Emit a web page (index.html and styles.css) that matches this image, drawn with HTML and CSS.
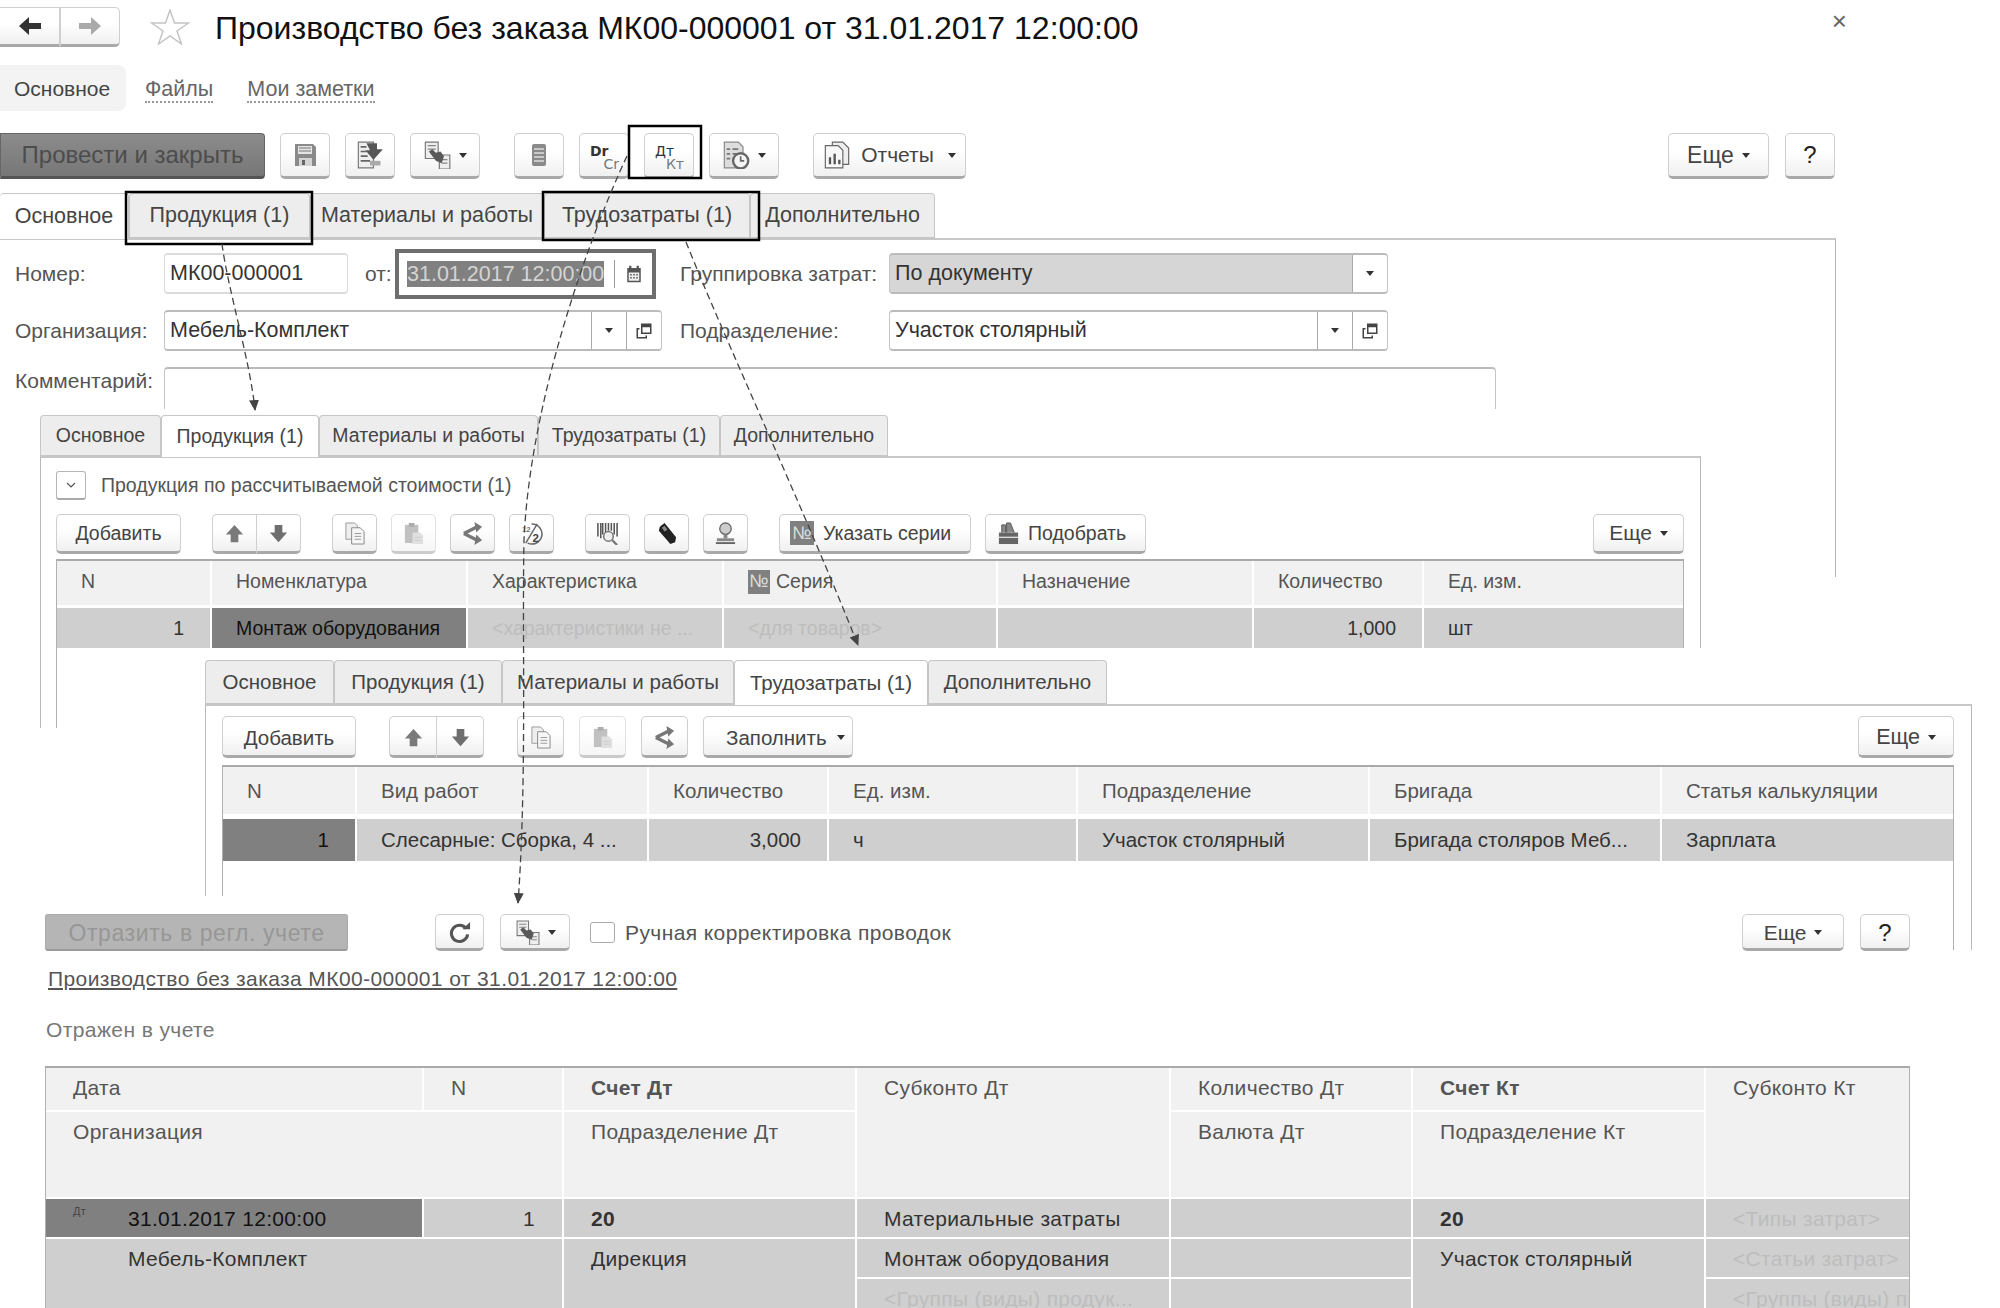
FILE: index.html
```html
<!DOCTYPE html>
<html lang="ru">
<head>
<meta charset="utf-8">
<title>Производство без заказа</title>
<link rel="stylesheet" href="styles.css">
</head>
<body>
<svg class="defs" width="0" height="0" aria-hidden="true">
  <defs>
    <symbol id="i-up" viewBox="0 0 24 24"><path d="M12 3 21 13H16V21H8V13H3Z" fill="#7a7a7a"/></symbol>
    <symbol id="i-down" viewBox="0 0 24 24"><path d="M12 21 21 11H16V3H8V11H3Z" fill="#6e6e6e"/></symbol>
    <symbol id="i-save" viewBox="0 0 24 24"><path d="M2 1H20L23 4V23H2Z" fill="#8a8a8a"/><path d="M5 3H19V11H5Z" fill="#e4e4e4"/><path d="M6 5H18M6 8H18" stroke="#999" stroke-width="1.4"/><path d="M6 15H19V23H6Z" fill="#d4d4d4"/><path d="M9 17H12V22H9Z" fill="#666"/></symbol>
    <symbol id="i-post" viewBox="0 0 24 24"><path d="M2 1H15V23H2Z" fill="#eee" stroke="#777"/><path d="M4 5H9M4 9H9M4 13H10M4 17H12" stroke="#666" stroke-width="1.4"/><path d="M9 2H18V7H23L15 16 8 8H12Z" fill="#555"/><path d="M12 17H21V21H12Z" fill="#aaa"/></symbol>
    <symbol id="i-related" viewBox="0 0 24 24"><path d="M2 1H13V15H2Z" fill="#eee" stroke="#777"/><path d="M4 4H11M4 7H11" stroke="#888"/><path d="M14 12H23V24H14Z" fill="#eee" stroke="#777"/><path d="M16 16H21M16 19H21" stroke="#888"/><path d="M5 9 8 7 11 10 15 9 18 13 16 19 11 17Z" fill="#5a5a5a"/></symbol>
    <symbol id="i-list" viewBox="0 0 24 24"><rect x="5" y="1" width="14" height="22" rx="2" fill="#8a8a8a"/><path d="M7 6H17M7 10H17M7 14H17M7 18H17" stroke="#ddd" stroke-width="1.6"/></symbol>
    <symbol id="i-report-time" viewBox="0 0 24 24"><path d="M2 1H14L18 5V23H2Z" fill="#ddd" stroke="#888"/><path d="M4 7H7M9 7H14M4 11H7M9 11H13M4 15H7" stroke="#777" stroke-width="1.5"/><circle cx="16" cy="17" r="6.5" fill="#f4f4f4" stroke="#666" stroke-width="2"/><path d="M16 13V17H19" stroke="#666" stroke-width="1.4" fill="none"/></symbol>
    <symbol id="i-reports" viewBox="0 0 24 24"><path d="M8 1H17L22 6V20H8Z" fill="#eee" stroke="#666"/><path d="M2 4H13L17 8V23H2Z" fill="#f8f8f8" stroke="#666"/><path d="M5 20V14H7V20ZM9 20V11H11V20ZM13 20V16H15V20Z" fill="#555"/></symbol>
    <symbol id="i-cal" viewBox="0 0 24 24"><path d="M3 4H21V23H3Z" fill="#555"/><path d="M7 1V6M17 1V6" stroke="#555" stroke-width="3"/><path d="M5 10H19V21H5Z" fill="#eee"/><path d="M7 12H9V14H7ZM11 12H13V14H11ZM15 12H17V14H15ZM7 16H9V18H7ZM11 16H13V18H11ZM15 16H17V18H15Z" fill="#555"/></symbol>
    <symbol id="i-open" viewBox="0 0 24 24"><path d="M9 3H21V15H9Z" fill="none" stroke="#444" stroke-width="2"/><path d="M9 3H21V7H9Z" fill="#444"/><path d="M6 9H3V21H15V18" fill="none" stroke="#444" stroke-width="2"/></symbol>
    <symbol id="i-copy" viewBox="0 0 24 24"><path d="M3 1H12L15 4V18H3Z" fill="#eee" stroke="#999"/><path d="M9 6H18L22 10V23H9Z" fill="#f6f6f6" stroke="#888"/><path d="M12 12H19M12 15H19M12 18H19" stroke="#999"/></symbol>
    <symbol id="i-paste" viewBox="0 0 24 24"><path d="M3 3H17V22H3Z" fill="#999"/><path d="M7 1H13V5H7Z" fill="#777"/><path d="M11 11H19L22 14V23H11Z" fill="#ccc"/><path d="M13 16H20M13 19H20" stroke="#aaa"/></symbol>
    <symbol id="i-share" viewBox="0 0 24 24"><path d="M3 12 17 5M3 12 17 19" fill="none" stroke="#777" stroke-width="3.600"/><path d="M14 0 22 5 16 11ZM16 13 22 19 14 24Z" fill="#777"/></symbol>
    <symbol id="i-half" viewBox="0 0 24 24"><path d="M12 2A10.500 10.500 0 1 1 8 22" fill="none" stroke="#666" stroke-width="1.600"/><path d="M6 22 18 2" stroke="#666" stroke-width="1.500"/><text x="2" y="10" class="half-a">12</text><text x="13" y="21" class="half-b">2</text></symbol>
    <symbol id="i-barcode" viewBox="0 0 24 24"><path d="M2 1V15M5 1V17M7 1V13M10 1V11M13 1V9M16 1V9M19 1V13M22 1V15" stroke="#555" stroke-width="1.6"/><circle cx="13" cy="15" r="5" fill="#eee" stroke="#777" stroke-width="1.6"/><path d="M17 19 22 24" stroke="#777" stroke-width="2.4"/></symbol>
    <symbol id="i-scanner" viewBox="0 0 24 24"><path d="M5 5 10 1 22 16 21 21 16 23 4 9Z" fill="#222"/><path d="M7 6 10 4 13 8 10 10Z" fill="#888"/></symbol>
    <symbol id="i-stamp" viewBox="0 0 24 24"><circle cx="12" cy="7" r="6" fill="#ccc" stroke="#666" stroke-width="1.4"/><path d="M10 13H14V17H10Z" fill="#888"/><path d="M3 17H21V20H3Z" fill="#888"/><path d="M2 22H22" stroke="#666" stroke-width="2"/></symbol>
    <symbol id="i-pick" viewBox="0 0 24 24"><path d="M2 11H22V23H2Z" fill="#666"/><path d="M5 11V3H9V11M10 11V1H14L18 11" fill="#888" stroke="#555"/><path d="M2 16H22" stroke="#ddd" stroke-width="1.4"/></symbol>
    <symbol id="i-refresh" viewBox="0 0 24 24"><path d="M19 8A8.5 8.5 0 1 0 20.500 14" fill="none" stroke="#555" stroke-width="3.200"/><path d="M15 8.500H23V1Z" fill="#555"/></symbol>
  </defs>
</svg>

<main class="canvas">

  <section class="win1">
    <header class="titlebar">
      <div class="histgroup">
        <button class="btn histbtn"><svg class="ic-hist" viewBox="0 0 24 24"><path d="M1 12 11 3V9H23V15H11V21Z" fill="#333"/></svg></button>
        <button class="btn histbtn"><svg class="ic-hist" viewBox="0 0 24 24"><path d="M23 12 13 3V9H1V15H13V21Z" fill="#aaa"/></svg></button>
      </div>
      <svg class="star" viewBox="0 0 40 36"><path d="M20 1 24.500 14H38.500L27 22 31.500 35 20 27 8.500 35 13 22 1.500 14H15.500Z" fill="none" stroke="#c4c4c4" stroke-width="1.500"/></svg>
      <h1 class="doc-title">Производство без заказа МК00-000001 от 31.01.2017 12:00:00</h1>
      <span class="close">×</span>
    </header>
    <nav class="navtabs">
      <span class="nav-active">Основное</span>
      <a class="nav-link nav-files">Файлы</a>
      <a class="nav-link nav-notes">Мои заметки</a>
    </nav>
    <div class="toolbar tb1">
      <button class="btn btn-primary">Провести и закрыть</button>
      <button class="btn w50"><svg class="ic"><use href="#i-save"/></svg></button>
      <button class="btn w50"><svg class="ic-l"><use href="#i-post"/></svg></button>
      <button class="btn w70"><svg class="ic-l"><use href="#i-related"/></svg><i class="caret"></i></button>
      <button class="btn w50 sep"><svg class="ic"><use href="#i-list"/></svg></button>
      <button class="btn w50 ledger"><b class="led-a">Dr</b><span class="led-b">Cr</span></button>
      <button class="btn w50 ledger"><span class="led-a">Дт</span><span class="led-b">Кт</span></button>
      <button class="btn w70"><svg class="ic-l"><use href="#i-report-time"/></svg><i class="caret"></i></button>
      <button class="btn reports sep"><svg class="ic-l"><use href="#i-reports"/></svg>Отчеты<i class="caret"></i></button>
      <button class="btn more1 push">Еще<i class="caret"></i></button>
      <button class="btn w50 help">?</button>
    </div>
    <div class="tabs tabs1">
      <span class="tab active plain">Основное</span>
      <span class="tab hl">Продукция (1)</span>
      <span class="tab">Материалы и работы</span>
      <span class="tab hl">Трудозатраты (1)</span>
      <span class="tab">Дополнительно</span>
    </div>
    <div class="form">
      <div class="row">
        <label class="lbl">Номер:</label>
        <div class="field f-num">МК00-000001</div>
        <label class="lbl-from">от:</label>
        <div class="date"><span class="date-val"><span class="selected">31.01.2017 12:00:00</span></span><span class="date-btn"><svg class="ic-cal"><use href="#i-cal"/></svg></span></div>
        <label class="lbl-2">Группировка затрат:</label>
        <div class="field f-sel gray"><span class="f-text">По документу</span><span class="f-btn white"><i class="caret"></i></span></div>
      </div>
      <div class="row">
        <label class="lbl">Организация:</label>
        <div class="field f-org"><span class="f-text">Мебель-Комплект</span><span class="f-btn"><i class="caret"></i></span><span class="f-btn"><svg class="ic-open"><use href="#i-open"/></svg></span></div>
        <label class="lbl-2 lbl-2b">Подразделение:</label>
        <div class="field f-sel"><span class="f-text">Участок столярный</span><span class="f-btn"><i class="caret"></i></span><span class="f-btn"><svg class="ic-open"><use href="#i-open"/></svg></span></div>
      </div>
      <div class="row row-top">
        <label class="lbl">Комментарий:</label>
        <div class="field f-comment"></div>
      </div>
    </div>
  </section>

  <section class="win2">
    <div class="tabs tabs2">
      <span class="tab">Основное</span>
      <span class="tab active">Продукция (1)</span>
      <span class="tab">Материалы и работы</span>
      <span class="tab">Трудозатраты (1)</span>
      <span class="tab">Дополнительно</span>
    </div>
    <div class="body2">
      <div class="collapse"><span class="chev"><svg viewBox="0 0 10 6"><path d="M1 1 5 5 9 1" fill="none" stroke="#555" stroke-width="1.200"/></svg></span><span>Продукция по рассчитываемой стоимости (1)</span></div>
      <div class="toolbar tb2">
        <button class="btn add2">Добавить</button>
        <div class="btn-pair pair2 sep"><button class="btn"><svg class="ic-s"><use href="#i-up"/></svg></button><button class="btn"><svg class="ic-s"><use href="#i-down"/></svg></button></div>
        <button class="btn w45 sep"><svg class="ic-s"><use href="#i-copy"/></svg></button>
        <button class="btn w45 dim"><svg class="ic-s"><use href="#i-paste"/></svg></button>
        <button class="btn w45"><svg class="ic-s"><use href="#i-share"/></svg></button>
        <button class="btn w45"><svg class="ic-s"><use href="#i-half"/></svg></button>
        <button class="btn w45 sep"><svg class="ic-s"><use href="#i-barcode"/></svg></button>
        <button class="btn w45"><svg class="ic-s"><use href="#i-scanner"/></svg></button>
        <button class="btn w45"><svg class="ic-s"><use href="#i-stamp"/></svg></button>
        <button class="btn series sep"><span class="num-badge">№</span>Указать серии</button>
        <button class="btn pick"><svg class="ic-s"><use href="#i-pick"/></svg>Подобрать</button>
        <button class="btn more2 push">Еще<i class="caret"></i></button>
      </div>
      <div class="grid-table gt2">
        <div class="th">N</div><div class="th">Номенклатура</div><div class="th">Характеристика</div><div class="th"><span class="num-badge small">№</span>Серия</div><div class="th">Назначение</div><div class="th">Количество</div><div class="th">Ед. изм.</div>
        <div class="td right">1</div><div class="td cur">Монтаж оборудования</div><div class="td ghost">&lt;характеристики не ...</div><div class="td ghost">&lt;для товаров&gt;</div><div class="td"></div><div class="td right">1,000</div><div class="td">шт</div>
      </div>
    </div>
  </section>

  <section class="win3">
    <div class="tabs tabs3">
      <span class="tab">Основное</span>
      <span class="tab">Продукция (1)</span>
      <span class="tab">Материалы и работы</span>
      <span class="tab active">Трудозатраты (1)</span>
      <span class="tab">Дополнительно</span>
    </div>
    <div class="body3">
      <div class="toolbar tb3">
        <button class="btn add3">Добавить</button>
        <div class="btn-pair pair3 sep"><button class="btn"><svg class="ic-s"><use href="#i-up"/></svg></button><button class="btn"><svg class="ic-s"><use href="#i-down"/></svg></button></div>
        <button class="btn w47 sep"><svg class="ic-s"><use href="#i-copy"/></svg></button>
        <button class="btn w47 dim"><svg class="ic-s"><use href="#i-paste"/></svg></button>
        <button class="btn w47"><svg class="ic-s"><use href="#i-share"/></svg></button>
        <button class="btn fill">Заполнить<i class="caret"></i></button>
        <button class="btn more3 push">Еще<i class="caret"></i></button>
      </div>
      <div class="grid-table gt3">
        <div class="th">N</div><div class="th">Вид работ</div><div class="th">Количество</div><div class="th">Ед. изм.</div><div class="th">Подразделение</div><div class="th">Бригада</div><div class="th">Статья калькуляции</div>
        <div class="td right cur">1</div><div class="td">Слесарные: Сборка, 4 ...</div><div class="td right">3,000</div><div class="td">ч</div><div class="td">Участок столярный</div><div class="td">Бригада столяров Меб...</div><div class="td">Зарплата</div>
      </div>
    </div>
  </section>

  <section class="win4">
    <div class="toolbar tb4">
      <button class="btn btn-disabled">Отразить в регл. учете</button>
      <button class="btn w49 sep4"><svg class="ic-s"><use href="#i-refresh"/></svg></button>
      <button class="btn w70"><svg class="ic-m"><use href="#i-related"/></svg><i class="caret"></i></button>
      <label class="check"><span class="box"></span>Ручная корректировка проводок</label>
      <button class="btn more4 push">Еще<i class="caret"></i></button>
      <button class="btn w50 help">?</button>
    </div>
    <a class="doclink">Производство без заказа МК00-000001 от 31.01.2017 12:00:00</a>
    <p class="status">Отражен в учете</p>
    <div class="grid-table gt4">
      <div class="th">Дата</div><div class="th">N</div><div class="th strong">Счет Дт</div><div class="th rs2">Субконто Дт</div><div class="th">Количество Дт</div><div class="th strong">Счет Кт</div><div class="th rs2">Субконто Кт</div>
      <div class="th cs2">Организация</div><div class="th">Подразделение Дт</div><div class="th">Валюта Дт</div><div class="th">Подразделение Кт</div>
      <div class="td cur ind"><span class="mini">Дт</span>31.01.2017 12:00:00</div><div class="td right">1</div><div class="td strong">20</div><div class="td">Материальные затраты</div><div class="td"></div><div class="td strong">20</div><div class="td ghost">&lt;Типы затрат&gt;</div>
      <div class="td cs2 rs3 ind">Мебель-Комплект</div><div class="td rs3">Дирекция</div><div class="td">Монтаж оборудования</div><div class="td"></div><div class="td rs3">Участок столярный</div><div class="td ghost">&lt;Статьи затрат&gt;</div>
      <div class="td ghost">&lt;Группы (виды) продук...</div><div class="td"></div><div class="td ghost">&lt;Группы (виды) продукции&gt;</div>
    </div>
  </section>

  <svg class="overlay" viewBox="0 0 2000 1308">
    <defs>
      <marker id="head" markerWidth="12" markerHeight="12" refX="10" refY="5" orient="auto" markerUnits="userSpaceOnUse"><path d="M0 0 11 5 0 10Z" fill="#444"/></marker>
    </defs>
    <g fill="none" stroke="#000" stroke-width="2.500">
      <rect x="629" y="126" width="72" height="52"/>
      <rect x="126" y="192" width="186" height="52"/>
      <rect x="543" y="192" width="216" height="48"/>
    </g>
    <g fill="none" stroke="#444" stroke-width="1.300" stroke-dasharray="7 4">
      <path d="M222 244C228 290 250 360 255 410" marker-end="url(#head)"/>
      <path d="M627 156C590 235 530 400 524 540C522 640 527 780 518 903" marker-end="url(#head)"/>
      <path d="M686 242C725 340 800 500 858 645" marker-end="url(#head)"/>
    </g>
  </svg>
</main>
</body>
</html>
```

FILE: styles.css
```css
* { box-sizing: border-box; }
html, body { margin: 0; padding: 0; background: #fff; }
body { font-family: "Liberation Sans", Arial, sans-serif; color: #444; }
.defs { position: absolute; }
.canvas { position: relative; width: 2000px; height: 1308px; overflow: hidden; background: #fff; }

button { font: inherit; color: inherit; }
.btn {
  display: inline-flex; align-items: center; justify-content: center; gap: 8px;
  height: 100%; padding: 0; flex: none; white-space: nowrap;
  background: linear-gradient(#fff 40%, #f0f0f0);
  border: 1px solid #cfcfcf; border-bottom: 3px solid #a9a9a9; border-radius: 5px;
}
.caret { display: inline-block; width: 0; height: 0; border-left: 4px solid transparent; border-right: 4px solid transparent; border-top: 5px solid #333; flex: none; }
.toolbar { display: flex; align-items: stretch; }
.push { margin-left: auto; }
.dim { opacity: .6; }
.w45 { width: 45px; } .w47 { width: 47px; } .w49 { width: 49px; } .w50 { width: 50px; } .w70 { width: 70px; }
.ic { width: 24px; height: 24px; }
.ic-l { width: 28px; height: 28px; }
.ic-m { width: 25px; height: 25px; }
.ic-s { width: 23px; height: 23px; }
.half-a { font: 700 8px "Liberation Sans", sans-serif; fill: #777; }
.half-b { font: 700 12px "Liberation Sans", sans-serif; fill: #444; }
.help { font-size: 24px; color: #222; }

/* window 1 */
.win1 { position: absolute; left: 0; top: 0; width: 2000px; height: 577px; overflow: hidden; }
.titlebar { display: flex; align-items: center; height: 40px; position: relative; top: 7px; }
.histgroup { display: flex; width: 120px; height: 40px; }
.histbtn { width: 60px; height: 40px; border-radius: 0; border-left-width: 0; }
.histbtn:last-child { border-radius: 0 5px 5px 0; border-left-width: 1px; border-right-width: 1px; }
.ic-hist { width: 26px; height: 24px; }
.star { width: 40px; height: 36px; margin-left: 30px; }
.doc-title { margin: 0 0 0 25px; font-size: 32px; font-weight: 400; color: #111; white-space: nowrap; position: relative; top: 1px; }
.close { margin-left: auto; margin-right: 153px; font-size: 26px; color: #666; position: relative; top: -6px; }
.navtabs { display: flex; align-items: center; height: 46px; margin-top: 25px; font-size: 21px; }
.nav-active { display: flex; align-items: center; height: 46px; width: 126px; padding: 2px 0 0 14px; background: #f3f3f3; border-radius: 0 8px 8px 0; }
.nav-link { color: #666; border-bottom: 2px dotted #999; line-height: 24px; margin-top: 4px; font-size: 21.500px; }
.nav-files { margin-left: 19px; }
.nav-notes { margin-left: 34px; }
.tb1 { height: 46px; margin-top: 22px; padding-right: 165px; font-size: 21px; gap: 15px; }
.tb1 .sep { margin-left: 19px; }
.btn-primary { width: 265px; font-size: 24px; background: linear-gradient(#8c8c8c, #777); color: #4c4c4c; border: 1px solid #666; border-bottom: 3px solid #555; border-radius: 0 4px 4px 0; }
.ledger { position: relative; font-size: 14px; font-family: "DejaVu Sans", sans-serif; }
.led-a { position: absolute; left: 10px; top: 9px; color: #333; }
.led-b { position: absolute; right: 9px; top: 22px; color: #777; }
.reports { width: 153px; gap: 10px; }
.reports .caret { margin-left: 4px; }
.more1 { width: 101px; font-size: 23px; }
.more1 + .help { margin-left: 1px; }

.tabs { display: grid; }
.tab { display: flex; align-items: center; justify-content: center; white-space: nowrap; background: #ededed; border: 1px solid #c6c6c6; border-bottom: 2px solid #c6c6c6; border-radius: 4px 4px 0 0; color: #444; }
.tab.active { background: #fff; border-bottom: 0; position: relative; z-index: 1; }
.tab.plain { border-left: 0; }
.tabs1 { height: 46px; margin-top: 14px; width: 935px; grid-template-columns: 129px 181px 234px 206px 185px; font-size: 21.500px; }

.form { margin-top: -1px; padding-top: 13px; border-top: 2px solid #c8c8c8; border-right: 1px solid #b5b5b5; width: 1836px; height: 340px; display: flex; flex-direction: column; gap: 16px; font-size: 21.500px; }
.row { display: flex; align-items: center; height: 41px; flex: none; }
.row-top { align-items: flex-start; }
.row-top .lbl { line-height: 28px; }
.lbl { width: 164px; padding-left: 15px; flex: none; color: #555; font-size: 21px; }
.field { height: 41px; flex: none; display: flex; align-items: stretch; background: #fff; border: 1px solid #c4c4c4; border-top: 2px solid #bbb; border-bottom: 2px solid #bbb; border-radius: 4px; color: #333; }
.f-num { width: 184px; padding-left: 5px; align-items: center; border-color: #dcdcdc; }
.lbl-from { width: 47px; padding-left: 17px; color: #555; flex: none; font-size: 21px; }
.date { width: 261px; height: 50px; margin: -5px 0; flex: none; display: flex; border: 4px solid #6e6e6e; background: #fff; padding: 7px 0; }
.date-val { width: 216px; padding-left: 8px; display: flex; align-items: center; border-right: 1px solid #999; }
.selected { background: #808080; color: #d4d4d4; line-height: 26px; white-space: nowrap; }
.date-btn { flex: 1; display: flex; align-items: center; justify-content: center; }
.ic-cal { width: 18px; height: 20px; }
.lbl-2 { width: 233px; padding-left: 24px; flex: none; color: #555; white-space: nowrap; font-size: 21px; }
.lbl-2b { width: 227px; padding-left: 18px; }
.f-sel { width: 499px; }
.f-org { width: 498px; }
.f-text { flex: 1; padding-left: 5px; display: flex; align-items: center; white-space: nowrap; }
.f-btn { width: 35px; border-left: 1px solid #aaa; display: flex; align-items: center; justify-content: center; background: #fff; border-radius: 0 3px 3px 0; }
.gray { background: #d6d6d6; }
.ic-open { width: 18px; height: 18px; }
.f-comment { width: 1332px; height: 60px; }

/* window 2 */
.win2 { position: absolute; left: 40px; top: 409px; width: 1661px; height: 319px; background: #fff; overflow: hidden; padding-top: 6px; }
.tabs2 { height: 42px; width: 848px; grid-template-columns: 121px 158px 219px 182px 168px; font-size: 19.500px; }
.body2 { margin-top: -1px; height: 300px; border: 1px solid #b8b8b8; border-top: 2px solid #c8c8c8; padding: 13px 16px 0 15px; font-size: 19.500px; }
.collapse { display: flex; align-items: center; gap: 15px; height: 28px; color: #555; }
.chev { width: 30px; height: 29px; border: 1px solid #b5b5b5; border-bottom: 2px solid #aaa; border-radius: 3px; display: flex; align-items: center; justify-content: center; }
.chev svg { width: 10px; height: 6px; }
.tb2 { height: 40px; margin-top: 15px; gap: 14px; }
.tb2 .sep { margin-left: 17px; }
.add2 { width: 125px; }
.btn-pair { display: flex; height: 100%; flex: none; }
.btn-pair .btn { flex: 1; width: 50%; }
.btn-pair .btn:first-child { border-right: 0; border-radius: 5px 0 0 5px; }
.btn-pair .btn:last-child { border-radius: 0 5px 5px 0; }
.pair2 { width: 89px; }
.num-badge { display: inline-flex; align-items: center; justify-content: center; width: 24px; height: 24px; background: #808080; color: #ddd; font-size: 18px; flex: none; }
.num-badge.small { width: 22px; height: 24px; margin-right: 6px; }
.series { width: 192px; justify-content: flex-start; padding-left: 10px; gap: 9px; }
.pick { width: 161px; justify-content: flex-start; padding-left: 11px; gap: 8px; }
.more2 { width: 91px; font-size: 21px; }

.grid-table { display: grid; background: #fff; border: 1px solid #b0b0b0; border-top: 2px solid #aaa; border-bottom: 0; column-gap: 2px; color: #444; white-space: nowrap; }
.th { background: #f1f1f1; display: flex; align-items: center; padding-left: 24px; overflow: hidden; color: #555; }
.td { background: #cfcfcf; display: flex; align-items: center; padding-left: 24px; overflow: hidden; color: #333; }
.right { justify-content: flex-end; padding-right: 26px; padding-left: 0; }
.cur { background: #808080; color: #111; }
.ghost { color: #bdbdbd; }
.strong { font-weight: 700; }
.gt2 { margin-top: 5px; height: 170px; grid-template-columns: 153px 254px 254px 272px 254px 168px 1fr; grid-template-rows: 44px 40px; row-gap: 3px; align-content: start; font-size: 19.500px; }
.gt2 .th { padding-bottom: 3px; }

/* window 3 */
.win3 { position: absolute; left: 196px; top: 648px; width: 1800px; height: 302px; background: #fff; overflow: hidden; padding: 12px 0 0 9px; }
.tabs3 { height: 45px; width: 902px; grid-template-columns: 129px 168px 232px 194px 179px; font-size: 20.500px; }
.body3 { margin-top: -1px; width: 1767px; height: 260px; border: 1px solid #b8b8b8; border-top: 2px solid #c8c8c8; padding: 10px 17px 0 16px; font-size: 20.500px; }
.tb3 { height: 42px; gap: 15px; }
.tb3 .btn { padding-top: 3px; }
.tb3 .sep { margin-left: 18px; }
.add3 { width: 134px; }
.pair3 { width: 95px; }
.tb3 .fill { width: 150px; justify-content: flex-start; padding-left: 22px; gap: 10px; }
.more3 { width: 96px; font-size: 21.500px; }
.gt3 { margin-top: 7px; height: 200px; grid-template-columns: 132px 290px 178px 247px 290px 290px 1fr; grid-template-rows: 47px 42px; row-gap: 5px; align-content: start; font-size: 20.500px; }

/* window 4 */
.win4 { position: absolute; left: 0; top: 896px; width: 1925px; height: 412px; background: #fff; padding: 18px 15px 0 45px; font-size: 21px; letter-spacing: .4px; overflow: hidden; }
.tb4 { height: 37px; gap: 16px; }
.tb4 .btn { padding-top: 2px; }
.tb4 .btn-disabled { width: 303px; font-size: 23px; letter-spacing: .6px; background: #b5b5b5; color: #979797; border: 1px solid #aaa; border-bottom: 2px solid #999; border-radius: 3px; }
.sep4 { margin-left: 71px; }
.check { display: flex; align-items: center; gap: 10px; margin-left: 4px; color: #555; }
.box { width: 25px; height: 21px; border: 1px solid #aaa; border-radius: 3px; }
.more4 { width: 102px; }
.doclink { display: block; margin: 16px 0 0 3px; line-height: 24px; text-decoration: underline; color: #555; white-space: nowrap; }
.status { margin: 27px 0 0 1px; line-height: 24px; color: #777; }
.gt4 { margin-top: 24px; width: 1865px; letter-spacing: .3px; grid-template-columns: 376px 138px 291px 312px 240px 291px 1fr; grid-template-rows: 42px 85px 38px 38px 38px; gap: 2px; }
.gt4 .th, .gt4 .td { padding-left: 27px; align-items: flex-start; padding-top: 8px; }
.gt4 .td.ind { padding-left: 82px; position: relative; }
.gt4 .right { padding-left: 0; padding-right: 27px; }
.mini { position: absolute; left: 27px; top: 6px; font-size: 11px; color: #444; }
.cs2 { grid-column: span 2; }
.rs2 { grid-row: span 2; }
.rs3 { grid-row: span 3; }

.overlay { position: absolute; left: 0; top: 0; width: 2000px; height: 1308px; pointer-events: none; z-index: 5; }
```
